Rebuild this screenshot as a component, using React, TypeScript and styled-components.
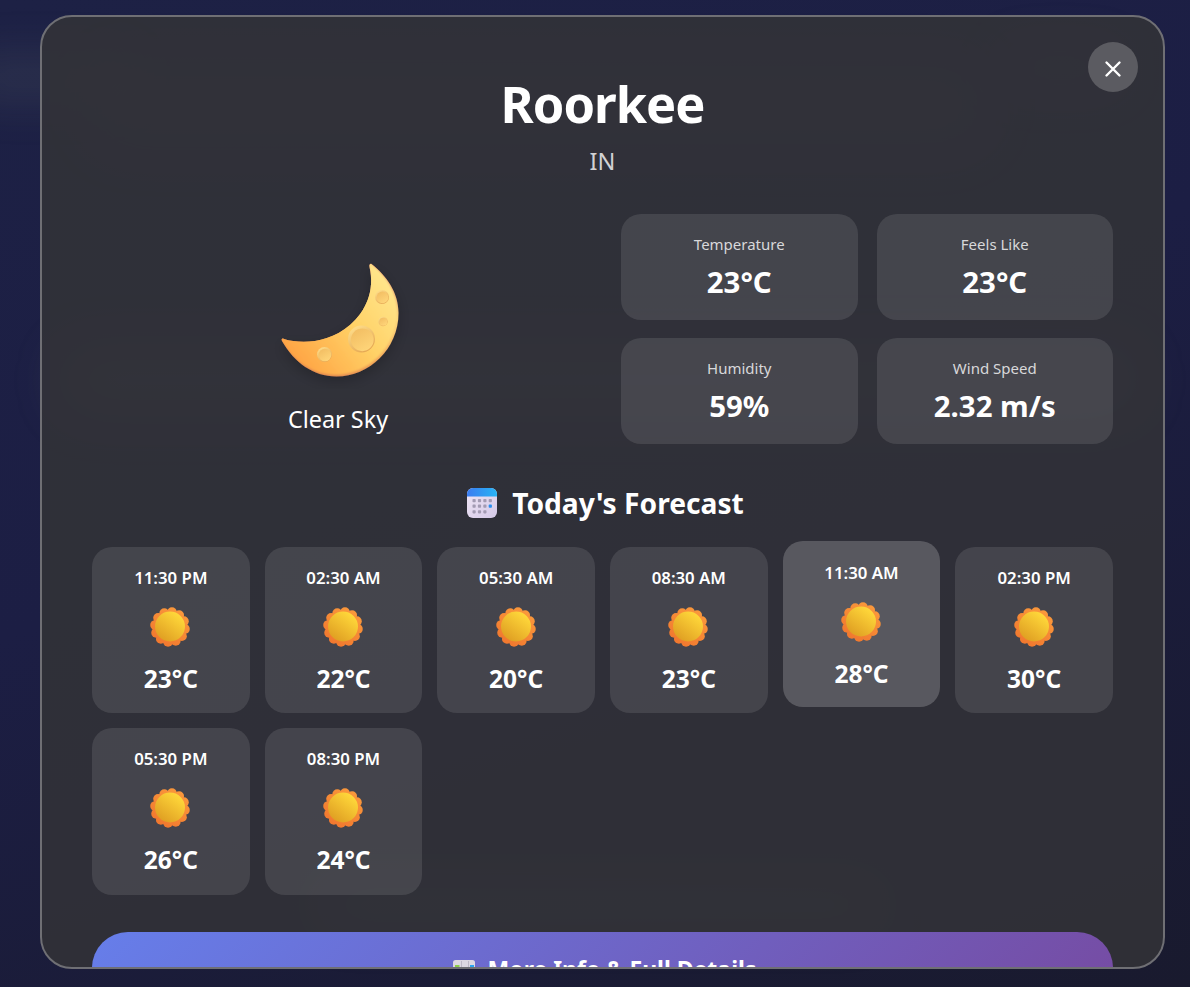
import React from "react";
import styled, { createGlobalStyle } from "styled-components";

const Global = createGlobalStyle`
  html, body { margin: 0; padding: 0; height: 100%; overflow: hidden; background: #1a1a2e; }
  * { box-sizing: border-box; }
  body { font-family: "Noto Sans", "Open Sans", sans-serif; }
`;

const Page = styled.div`
  position: relative;
  width: 1190px;
  height: 987px;
  overflow: hidden;
  padding: 15px 25px 18px 40px;
  background: linear-gradient(160deg, #1d2145 0%, #1c1e44 45%, #191a2e 100%);
`;

const Glow = styled.div<{ $x: number; $y: number; $w: number; $h: number; $a: number }>`
  position: absolute;
  left: ${p => p.$x}px;
  top: ${p => p.$y}px;
  width: ${p => p.$w}px;
  height: ${p => p.$h}px;
  border-radius: 40px;
  background: rgba(150, 160, 130, ${p => p.$a});
  filter: blur(24px);
`;

const Modal = styled.div`
  position: relative;
  width: 1125px;
  height: 954px;
  overflow: hidden;
  padding: 54px 50px 0;
  border: 2px solid #6f6f74;
  border-radius: 32px;
  background: rgba(50, 50, 55, 0.9);
  color: #fff;
`;

const CloseButton = styled.button`
  position: absolute;
  top: 25px;
  right: 25px;
  width: 50px;
  height: 50px;
  padding: 4px 0 0;
  display: flex;
  align-items: center;
  justify-content: center;
  border: 0;
  border-radius: 50%;
  background: #5b5b61;
  color: #fff;
`;

const Header = styled.header`
  text-align: center;
  margin-bottom: 37px;
`;

const City = styled.h1`
  margin: 0;
  font-size: 50.6px;
  line-height: 66px;
  font-weight: 700;
  letter-spacing: -1px;
`;

const Country = styled.div`
  margin-top: 8px;
  font-size: 23.5px;
  line-height: 32px;
  font-weight: 400;
  color: #d2d2d4;
`;

const Main = styled.section`
  display: grid;
  grid-template-columns: 492px 492px;
  gap: 37px;
  margin-bottom: 39px;
`;

const Current = styled.div`
  display: flex;
  flex-direction: column;
  align-items: center;
  padding-top: 35px;
`;

const Condition = styled.div`
  margin-top: 14px;
  font-size: 23.4px;
  line-height: 32px;
  font-weight: 400;
`;

const Stats = styled.div`
  display: grid;
  grid-template-columns: 1fr 1fr;
  gap: 18px 19px;
`;

const StatCard = styled.div`
  height: 106px;
  padding-top: 20px;
  text-align: center;
  border-radius: 20px;
  background: rgba(255, 255, 255, 0.1);
`;

const StatLabel = styled.div`
  font-size: 15px;
  line-height: 20px;
  font-weight: 400;
  color: #d8d8da;
`;

const StatValue = styled.div`
  margin-top: 10px;
  font-size: 29.4px;
  line-height: 36px;
  font-weight: 700;
`;

const ForecastTitle = styled.h2`
  display: flex;
  align-items: center;
  justify-content: center;
  gap: 14px;
  margin: 0 0 24px;
  height: 40px;
  padding-left: 5px;
  font-size: 28.2px;
  font-weight: 700;
`;

const ForecastGrid = styled.div`
  display: grid;
  grid-template-columns: repeat(6, 1fr);
  gap: 15px;
`;

const HourCard = styled.div<{ $active?: boolean }>`
  height: 166.3px;
  padding-top: ${p => (p.$active ? 20 : 19)}px;
  display: flex;
  flex-direction: column;
  align-items: center;
  border-radius: 20px;
  background: rgba(255, 255, 255, ${p => (p.$active ? 0.2 : 0.1)});
  transform: translateY(${p => (p.$active ? "-6px" : "0")});
`;

const HourTime = styled.div`
  font-size: 16.8px;
  line-height: 24px;
  font-weight: 600;
`;

const HourTemp = styled.div`
  font-size: 24.5px;
  line-height: 32px;
  font-weight: 700;
`;

const SunSlot = styled.div`
  margin: 15px 0 14px -1px;
  height: 44px;
  display: flex;
  align-items: center;
`;

const MoreButton = styled.button`
  display: flex;
  align-items: center;
  justify-content: center;
  gap: 12px;
  width: 100%;
  height: 75px;
  margin-top: 37px;
  padding-left: 9px;
  border: 0;
  border-radius: 36px;
  background: linear-gradient(135deg, #667eea 0%, #764ba2 100%);
  color: #fff;
  font-family: inherit;
  font-size: 23px;
  font-weight: 700;
`;

const Sun = ({ id }: { id: string }) => {
  const lobes = Array.from({ length: 12 }, (_, i) => {
    const a = ((i + 0.25) / 12) * Math.PI * 2 - Math.PI / 2;
    return { x: 22 + Math.cos(a) * 15, y: 22 + Math.sin(a) * 15 };
  });
  return (
    <svg width="44" height="44" viewBox="0 0 44 44" aria-hidden="true">
      <defs>
        <linearGradient id={`${id}-o`} gradientUnits="userSpaceOnUse" x1="34" y1="4" x2="10" y2="40">
          <stop offset="0" stopColor="#fb9a3c" />
          <stop offset="1" stopColor="#f0762e" />
        </linearGradient>
        <linearGradient id={`${id}-c`} x1="0.8" y1="0.1" x2="0.2" y2="0.9">
          <stop offset="0" stopColor="#ffd83a" />
          <stop offset="1" stopColor="#e0a023" />
        </linearGradient>
      </defs>
      {lobes.map((l, i) => (
        <circle key={i} cx={l.x} cy={l.y} r="4.9" fill={`url(#${id}-o)`} />
      ))}
      <circle cx="22" cy="22" r="16.5" fill={`url(#${id}-o)`} />
      <circle cx="22" cy="21.5" r="15" fill={`url(#${id}-c)`} />
    </svg>
  );
};

const Crater = ({ x, y, r }: { x: number; y: number; r: number }) => (
  <g>
    <circle cx={x} cy={y} r={r} fill="url(#craterRim)" />
    <circle cx={x + r * 0.06} cy={y + r * 0.06} r={r * 0.84} fill="url(#crater)" />
  </g>
);

const MOON_PATH =
  "M113.5 15C129 27 140.5 44 140.5 64C140.5 100 111 127.5 78.5 127.5C55 127.5 36 113 24 92C23 90 24 89 26 90C42 95 70 95 92 76C108 62 117 42 111.5 18C111 15 112.5 14.5 113.5 15Z";

const Moon = () => (
  <svg width="160" height="140" viewBox="0 0 160 140" aria-hidden="true">
    <defs>
      <linearGradient id="moonBody" gradientUnits="userSpaceOnUse" x1="135" y1="40" x2="40" y2="115">
        <stop offset="0" stopColor="#ffe58a" />
        <stop offset="0.45" stopColor="#ffd166" />
        <stop offset="1" stopColor="#ffa444" />
      </linearGradient>
      <linearGradient id="moonRim" gradientUnits="userSpaceOnUse" x1="120" y1="15" x2="60" y2="127">
        <stop offset="0" stopColor="#d2705f" />
        <stop offset="0.3" stopColor="#fbd27a" />
        <stop offset="0.7" stopColor="#ef9f56" />
        <stop offset="1" stopColor="#d9804f" />
      </linearGradient>
      <linearGradient id="crater" x1="0.2" y1="0" x2="0.8" y2="1">
        <stop offset="0" stopColor="#f2bd62" />
        <stop offset="1" stopColor="#ffd67a" />
      </linearGradient>
      <linearGradient id="craterRim" x1="0.2" y1="0" x2="0.8" y2="1">
        <stop offset="0" stopColor="#ffdf8c" />
        <stop offset="1" stopColor="#e2a24e" />
      </linearGradient>
      <clipPath id="moonClip">
        <path d={MOON_PATH} />
      </clipPath>
      <filter id="moonShadow" x="-20%" y="-20%" width="140%" height="150%">
        <feDropShadow dx="0" dy="5" stdDeviation="7" floodColor="#000" floodOpacity="0.22" />
      </filter>
      <filter id="moonSoft" x="-5%" y="-5%" width="110%" height="110%">
        <feGaussianBlur stdDeviation="0.9" />
      </filter>
    </defs>
    <path d={MOON_PATH} fill="url(#moonRim)" filter="url(#moonShadow)" />
    <g clipPath="url(#moonClip)">
      <path d={MOON_PATH} fill="url(#moonBody)" filter="url(#moonSoft)" transform="translate(-1.2 -1.6)" />
    </g>
    <Crater x={124} y={48} r={7} />
    <Crater x={125} y={72.5} r={4.7} />
    <Crater x={103.5} y={90} r={13.5} />
    <Crater x={66.5} y={105.5} r={7.5} />
  </svg>
);

const Calendar = () => (
  <svg width="32" height="32" viewBox="0 0 32 32" aria-hidden="true">
    <defs>
      <linearGradient id="calTop" x1="0" y1="0" x2="1" y2="0">
        <stop offset="0" stopColor="#3b7cf0" />
        <stop offset="1" stopColor="#27b4f5" />
      </linearGradient>
      <linearGradient id="calBody" x1="0" y1="0" x2="1" y2="1">
        <stop offset="0" stopColor="#efe6f4" />
        <stop offset="1" stopColor="#d5c9e8" />
      </linearGradient>
    </defs>
    <rect x="1" y="1" width="30" height="30" rx="6" fill="url(#calBody)" />
    <path d="M1 9.5V7a6 6 0 0 1 6-6h18a6 6 0 0 1 6 6v2.5Z" fill="url(#calTop)" />
    {[0, 1, 2].map(r =>
      [0, 1, 2, 3].map(c =>
        r === 2 && c === 3 ? null : (
          <rect
            key={`${r}-${c}`}
            x={6.5 + c * 5.4}
            y={12 + r * 5.6}
            width="3.2"
            height="3.2"
            rx="0.8"
            fill={r === 1 && c === 3 ? "#2a8ff0" : "#a39bb3"}
          />
        )
      )
    )}
  </svg>
);

const Newspaper = () => (
  <svg width="24" height="24" viewBox="0 0 24 24" aria-hidden="true">
    <rect x="1" y="3" width="22" height="18" rx="2.5" fill="#dcd8e2" />
    <rect x="9" y="4" width="1" height="16" fill="#bdb8c6" />
    <rect x="16" y="4" width="1" height="16" fill="#bdb8c6" />
    <rect x="3" y="8" width="4.5" height="10" fill="#8ccf4a" />
    <rect x="18" y="8" width="4" height="10" fill="#2aa5f0" />
  </svg>
);

const stats = [
  ["Temperature", "23°C"],
  ["Feels Like", "23°C"],
  ["Humidity", "59%"],
  ["Wind Speed", "2.32 m/s"],
];

const hours = [
  ["11:30 PM", "23°C"],
  ["02:30 AM", "22°C"],
  ["05:30 AM", "20°C"],
  ["08:30 AM", "23°C"],
  ["11:30 AM", "28°C"],
  ["02:30 PM", "30°C"],
  ["05:30 PM", "26°C"],
  ["08:30 PM", "24°C"],
];

export default function App() {
  return (
    <Page>
      <Global />
      <Glow $x={-40} $y={60} $w={170} $h={36} $a={0.16} />
      <Glow $x={1000} $y={50} $w={120} $h={36} $a={0.14} />
      <Glow $x={60} $y={345} $w={1080} $h={70} $a={0.2} />
      <Glow $x={90} $y={60} $w={900} $h={90} $a={0.12} />
      <Glow $x={320} $y={885} $w={560} $h={40} $a={0.18} />
      <Modal>
        <CloseButton aria-label="Close">
          <svg width="18" height="18" viewBox="0 0 18 18" aria-hidden="true">
            <path d="M2.5 2.5L15.5 15.5M15.5 2.5L2.5 15.5" stroke="#fff" strokeWidth="2.4" strokeLinecap="round" />
          </svg>
        </CloseButton>
        <Header>
          <City>Roorkee</City>
          <Country>IN</Country>
        </Header>
        <Main>
          <Current>
            <Moon />
            <Condition>Clear Sky</Condition>
          </Current>
          <Stats>
            {stats.map(([label, value]) => (
              <StatCard key={label}>
                <StatLabel>{label}</StatLabel>
                <StatValue>{value}</StatValue>
              </StatCard>
            ))}
          </Stats>
        </Main>
        <ForecastTitle>
          <Calendar />
          Today's Forecast
        </ForecastTitle>
        <ForecastGrid>
          {hours.map(([time, temp], i) => (
            <HourCard key={time} $active={i === 4}>
              <HourTime>{time}</HourTime>
              <SunSlot>
                <Sun id={`sun${i}`} />
              </SunSlot>
              <HourTemp>{temp}</HourTemp>
            </HourCard>
          ))}
        </ForecastGrid>
        <MoreButton>
          <Newspaper />
          More Info &amp; Full Details
        </MoreButton>
      </Modal>
    </Page>
  );
}
